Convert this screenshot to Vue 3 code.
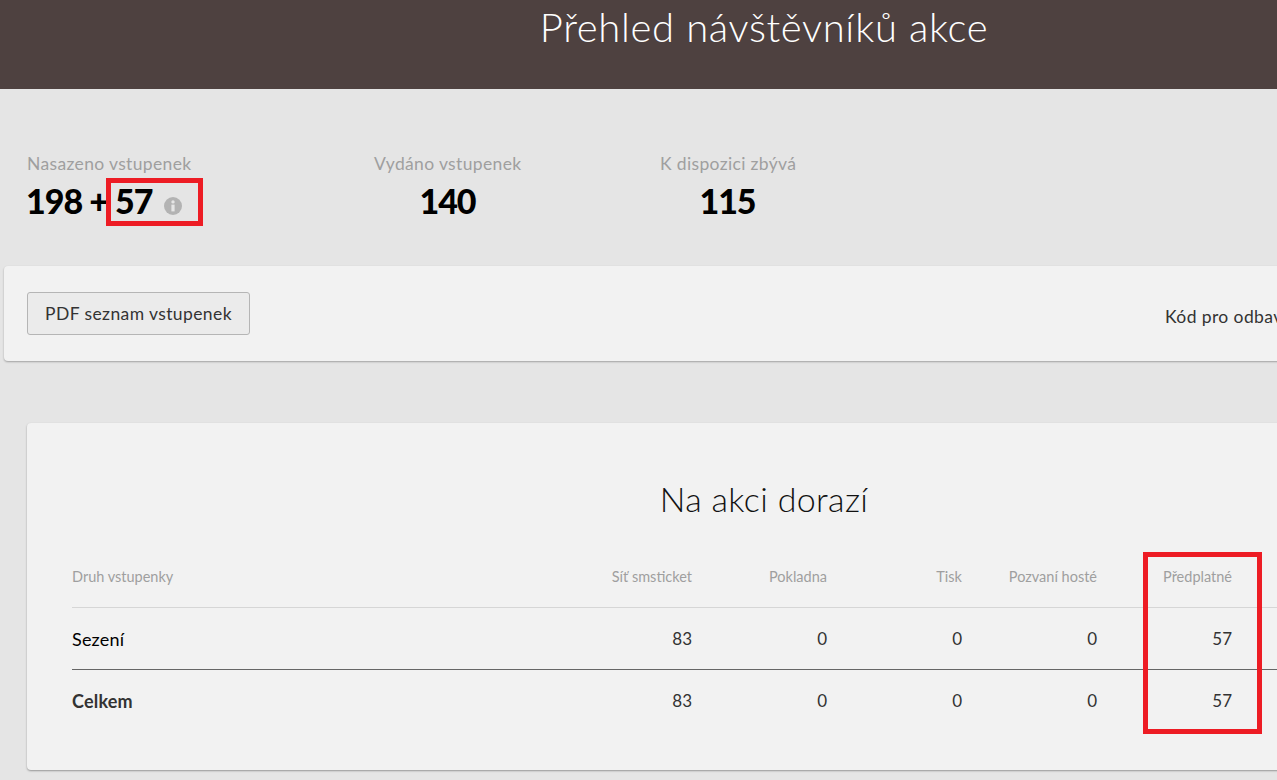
<template>
  <div class="page">
    <header class="top">
      <h1>Přehled návštěvníků akce</h1>
    </header>

    <section class="stats">
      <div class="stat first">
        <div class="label">Nasazeno vstupenek</div>
        <div class="value">198 + 57<svg class="info" viewBox="0 0 18 18" width="18" height="18"><circle cx="9" cy="9" r="9" fill="#b3b3b3"/><rect x="7.4" y="7.6" width="3.2" height="6.8" fill="#e6e6e6"/><circle cx="9" cy="4.9" r="1.7" fill="#e6e6e6"/></svg></div>
        <span class="mark mark-stat"></span>
      </div>
      <div class="stat second">
        <div class="label">Vydáno vstupenek</div>
        <div class="value">140</div>
      </div>
      <div class="stat third">
        <div class="label">K dispozici zbývá</div>
        <div class="value">115</div>
      </div>
    </section>

    <section class="toolbar">
      <button class="btn">PDF seznam vstupenek</button>
      <span class="code">Kód pro odbavení</span>
    </section>

    <section class="card">
      <h2>Na akci dorazí</h2>
      <div class="table">
        <div class="row head">
          <div class="name">Druh vstupenky</div>
          <div v-for="c in columns" :key="c" class="num">{{ c }}</div>
          <div></div>
        </div>
        <div v-for="r in rows" :key="r.name" class="row" :class="{ total: r.total }">
          <div class="name">{{ r.name }}</div>
          <div v-for="(v, i) in r.values" :key="i" class="num">{{ v }}</div>
          <div></div>
        </div>
      </div>
      <span class="mark mark-col"></span>
    </section>
  </div>
</template>

<script setup>
const columns = ['Síť smsticket', 'Pokladna', 'Tisk', 'Pozvaní hosté', 'Předplatné']

const rows = [
  { name: 'Sezení', values: [83, 0, 0, 0, 57] },
  { name: 'Celkem', values: [83, 0, 0, 0, 57], total: true }
]
</script>

<style>
html, body {
  margin: 0;
  height: 780px;
  overflow: hidden;
  background: #e5e5e5;
}
</style>

<style scoped>
.page {
  width: 1528px;
  font-family: Lato, "Liberation Sans", sans-serif;
  color: #333;
}

.top {
  height: 89px;
  background: #4e4140;
}

h1 {
  margin: 0;
  padding-top: 4px;
  font-size: 40px;
  line-height: 46px;
  font-weight: 300;
  letter-spacing: 0.65px;
  color: #fff;
  text-align: center;
}

.stats {
  display: flex;
  padding: 65px 0 0 27px;
  height: 112px;
}

.stat {
  position: relative;
  white-space: nowrap;
}

.first {
  width: 347px;
}

.first .value {
  margin-left: -1px;
}

.second {
  width: 147px;
  margin-right: 139px;
  text-align: center;
}

.third {
  width: 135px;
  text-align: center;
}

.label {
  font-size: 17.5px;
  line-height: 20px;
  letter-spacing: 0.35px;
  color: #9f9f9f;
}

.value {
  margin-top: 7px;
  font-size: 34px;
  line-height: 40px;
  font-weight: 900;
  letter-spacing: -1px;
  color: #000;
}

.info {
  vertical-align: -1px;
  margin-left: 12px;
}

.mark {
  position: absolute;
  border: 5px solid #ed1c24;
  box-sizing: border-box;
}

.mark-stat {
  left: 79px;
  top: 24px;
  width: 97px;
  height: 48px;
}

.toolbar {
  display: flex;
  justify-content: space-between;
  margin-left: 4px;
  height: 95px;
  background: #f2f2f2;
  border-radius: 4px;
  box-shadow: 0 1px 2px rgba(0, 0, 0, 0.3);
  padding-left: 23px;
  box-sizing: border-box;
  width: 1520px;
}

.btn {
  margin-top: 26px;
  width: 223px;
  height: 43px;
  padding: 0;
  background: #ebebeb;
  border: 1px solid #b5b5b5;
  border-radius: 3px;
  font-family: inherit;
  font-size: 17.5px;
  letter-spacing: 0.4px;
  color: #333;
}

.code {
  position: absolute;
  left: 1165px;
  top: 306px;
  font-size: 17.5px;
  line-height: 22px;
  letter-spacing: 0.4px;
  color: #333;
  white-space: nowrap;
}

.card {
  position: relative;
  margin: 62px 27px 0;
  height: 347px;
  background: #f2f2f2;
  border-radius: 4px;
  box-shadow: 0 1px 2px rgba(0, 0, 0, 0.35);
  padding: 0 45px;
  box-sizing: border-box;
}

h2 {
  margin: 0;
  padding-top: 55px;
  font-size: 34px;
  line-height: 42px;
  font-weight: 300;
  letter-spacing: 0.35px;
  color: #111;
  text-align: center;
}

.table {
  margin-top: 37px;
}

.row {
  display: grid;
  grid-template-columns: 485px repeat(5, 135px) 1fr;
  align-items: center;
  height: 62px;
  font-size: 17px;
  border-top: 1px solid #666;
  box-sizing: border-box;
}

.head {
  height: 51px;
  padding-bottom: 12px;
  border-top: 0;
  border-bottom: 1px solid #d6d6d6;
  font-size: 14.5px;
  color: #9f9f9f;
}

.row.head + .row {
  height: 61px;
  border-top: 0;
}

.num {
  text-align: right;
}

.row .name {
  font-size: 18px;
  letter-spacing: 0.2px;
  color: #000;
}

.head .name {
  font-size: 14.5px;
  letter-spacing: 0;
  color: #9f9f9f;
}

.row.total .name {
  font-weight: 700;
  color: #333;
}

.mark-col {
  left: 1116px;
  top: 129px;
  width: 119px;
  height: 182px;
}
</style>
